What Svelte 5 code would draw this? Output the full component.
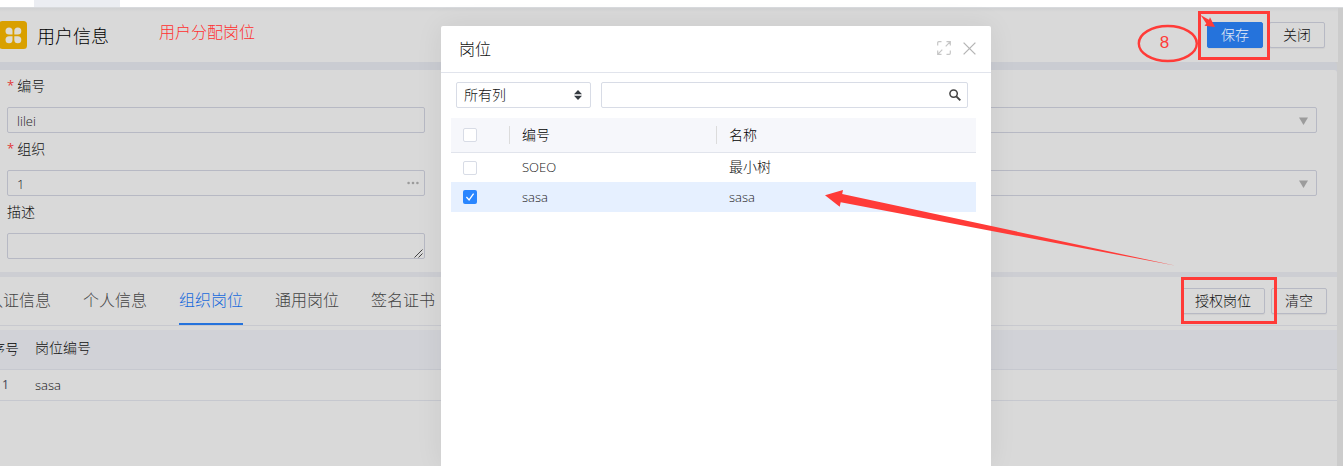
<script>
  const tabs = ['认证信息', '个人信息', '组织岗位', '通用岗位', '签名证书'];
  const active = '组织岗位';
  const rows = [
    { code: 'SOEO', name: '最小树', checked: false },
    { code: 'sasa', name: 'sasa', checked: true }
  ];
</script>

<div class="page">
  <div class="topbar"><span class="toptab"></span></div>

  <header class="head">
    <svg class="logo" viewBox="0 0 28 28">
      <rect width="28" height="28" rx="3.5" fill="#d9a000" />
      <g fill="#dedbd3">
        <path d="M13.500 13.500H10a3.500 3.500 0 1 1 3.500-3.500z" />
        <path d="M15.300 13.500V10a3.500 3.500 0 1 1 3.500 3.500z" />
        <path d="M13.500 15.300V18.800a3.500 3.500 0 1 1-3.500-3.500z" />
        <path d="M15.300 15.300h3.500a3.500 3.500 0 1 1-3.500 3.500z" />
      </g>
    </svg>
    <h1>用户信息</h1>
    <span class="note">用户分配岗位</span>
    <div class="actions">
      <button class="btn primary">保存</button>
      <button class="btn">关闭</button>
    </div>
  </header>

  <section class="card">
    <div class="col left">
      <div class="label"><i>*</i>编号</div>
      <div class="field">lilei</div>
      <div class="label"><i>*</i>组织</div>
      <div class="field">1
        <svg class="dots" width="12" height="4" viewBox="0 0 12 4" fill="#9b9b9b"><circle cx="1.6" cy="2" r="1.3" /><circle cx="6" cy="2" r="1.3" /><circle cx="10.4" cy="2" r="1.3" /></svg>
      </div>
      <div class="label">描述</div>
      <div class="field area">
        <svg width="9" height="9" viewBox="0 0 9 9" stroke="#444" stroke-width="1"><path d="M.5 8.5l8-8M4.5 8.5l4-4" /></svg>
      </div>
    </div>
    <div class="col right">
      <div class="label"></div>
      <div class="field"><svg class="caret" width="9" height="8" viewBox="0 0 9 8"><path d="M0 .5h9L4.500 8z" fill="#9c9c9c" /></svg></div>
      <div class="label"></div>
      <div class="field"><svg class="caret" width="9" height="8" viewBox="0 0 9 8"><path d="M0 .5h9L4.500 8z" fill="#9c9c9c" /></svg></div>
    </div>
  </section>

  <section class="panel">
    <div class="tabbar">
      <nav>
        {#each tabs as t}
          <span class="tab" class:active={t === active}>{t}</span>
        {/each}
      </nav>
      <div class="actions2">
        <button class="btn wide">授权岗位</button>
        <button class="btn">清空</button>
      </div>
    </div>
    <div class="grid ghead"><span class="no">序号</span><span>岗位编号</span></div>
    <div class="grid grow"><span class="no">1</span><span class="lat">sasa</span></div>
  </section>
</div>

<div class="modal">
  <div class="mhead">
    <span>岗位</span>
    <svg class="expand" width="14" height="14" viewBox="0 0 14 14" fill="none" stroke="#c6c6c6" stroke-width="1.2">
      <path d="M.7 4.500V1.700a1 1 0 0 1 1-1H4.500M9.500 .7h3.800v3.800M13.300 .7L8.700 5.300M13.300 9.500v2.800a1 1 0 0 1-1 1H9.500M4.500 13.300H.7V9.500M.7 13.300l4.600-4.600" />
    </svg>
    <svg width="13" height="13" viewBox="0 0 13 13" fill="none" stroke="#b5b5b5" stroke-width="1.3"><path d="M.6 .6l11.800 11.800M12.400 .6L.6 12.400" /></svg>
  </div>
  <div class="filter">
    <div class="select"><span>所有列</span>
      <svg width="8" height="10" viewBox="0 0 8 10" fill="#343a40"><path d="M0 4.200L4 0l4 4.200zM0 5.800h8L4 10z" /></svg>
    </div>
    <div class="search">
      <svg width="12" height="12" viewBox="0 0 12 12" fill="none" stroke="#444"><circle cx="4.600" cy="4.600" r="3.700" stroke-width="1.500" /><path d="M7.300 7.300l4 4" stroke-width="1.900" /></svg>
    </div>
  </div>
  <div class="table">
    <div class="tr th"><div><span class="box"></span></div><div class="sep"><span>编号</span></div><div class="sep"><span>名称</span></div></div>
    {#each rows as r}
      <div class="tr" class:sel={r.checked}>
        <div>
          <span class="box" class:on={r.checked}>
            {#if r.checked}
              <svg width="14" height="14" viewBox="0 0 14 14" fill="none" stroke="#fff" stroke-width="1.300"><path d="M3.400 7l2.700 3L10.600 3.700" /></svg>
            {/if}
          </span>
        </div>
        <div class="lat">{r.code}</div>
        <div class:lat={r.checked} class:cjk={!r.checked}>{r.name}</div>
      </div>
    {/each}
  </div>
</div>

<svg class="marks" width="1343" height="466" viewBox="0 0 1343 466">
  <g fill="none" stroke="#ff3b38" stroke-width="3">
    <rect x="1199.500" y="12.500" width="69" height="46" />
    <rect x="1182.500" y="278.500" width="93" height="44" />
    <ellipse cx="1167.800" cy="43.500" rx="29" ry="17.500" stroke-width="2.400" />
  </g>
  <g fill="#ff3b38">
    <path d="M825 195.300L843 190l-.8 4L1176 265.800 840.700 202.300l-1 4.500z" />
    <path d="M1200.500 15l8.500 4.800 1-2.600 5 9.800-10.500-1.200 1.800-2.200z" />
    <text x="1159.800" y="48">8</text>
  </g>
</svg>

<style>
  :global(body) { margin: 0; overflow: hidden; }
  :global(#app) { font: 14px/20px "Noto Sans CJK SC", sans-serif; font-weight: 300; color: #111; }
  .page { height: 466px; width: 1343px; background: #ccc; overflow: hidden; }
  .topbar { box-sizing: border-box; height: 8px; background: #fff; border-bottom: 1px solid #d8dadd; padding-left: 34px; display: flex; }
  .toptab { width: 86px; background: #ebedf2; }
  .head {
    width: 1338px; height: 54px; box-sizing: border-box; display: flex; align-items: center; padding-right: 13px;
    background: linear-gradient(#d0d1d3, #d9d9d9 4px);
  }
  .logo { width: 28px; height: 28px; margin-left: -1px; flex: none; }
  h1 { font-size: 18px; font-weight: 300; margin: -1px 0 0 10px; width: 72px; line-height: 26px; color: #000; white-space: nowrap; }
  .note { font-size: 16px; color: #ff3030; margin: -8px 0 0 50px; }
  .actions { margin-left: auto; display: flex; gap: 6px; }
  .btn {
    box-sizing: border-box; width: 56px; height: 26px; padding: 0 0 2px; border: 1px solid #b7b9c4; border-radius: 2px;
    background: #d9d9d9; color: #111; font: inherit; line-height: 20px; box-shadow: 0 1px 1px rgba(0, 0, 0, .05);
  }
  .btn.primary { background: #2573dc; border-color: #2573dc; color: #e8eef6; }
  .btn.wide { width: 84px; }
  .card {
    margin-top: 8px; width: 1337px; height: 202px; box-sizing: border-box; background: #d9d9d9; display: flex;
    justify-content: space-between; padding: 0 20px 0 7px; border-radius: 0 3px 0 0;
    box-shadow: 0 -8px 0 #caccd2, 0 5px 0 #cdced3;
  }
  .col { width: 418px; }
  .col.right { width: 600px; }
  .label { height: 37px; line-height: 31px; color: #111; }
  .label i { font: 13px/30px "Open Sans", sans-serif; color: #e23a3a; margin-right: 3px; float: left; }
  .field {
    box-sizing: border-box; height: 26px; border: 1px solid #b7b9c4; border-radius: 2px; padding: 1px 0 0 9px; display: flex;
    font-family: "Open Sans", sans-serif; font-size: 13px; color: #222; line-height: 24px;
  }
  .dots { margin: 9px 5px 0 auto; }
  .caret { margin: 8px 8px 0 auto; }
  .area { padding: 0; align-items: flex-end; justify-content: flex-end; }
  .area svg { margin: 0 1px 0 0; }
  .panel { margin-top: 5px; width: 1337px; height: 189px; background: #d9d9d9; }
  .tabbar { height: 48px; border-bottom: 1px solid #c8c9cf; display: flex; justify-content: space-between; padding-right: 10px; }
  nav { display: flex; gap: 32px; margin-left: -13px; }
  .tab { width: 64px; height: 46px; font-size: 16px; line-height: 44px; color: #444; white-space: nowrap; }
  .tab.active { color: #1769dc; border-bottom: 2px solid #2573dc; }
  .actions2 { display: flex; gap: 6px; padding-top: 11px; }
  .grid { display: flex; box-sizing: border-box; border-bottom: 1px solid #c6c8cf; }
  .ghead { margin-top: 4px; height: 40px; background: #d1d2d7; line-height: 35px; }
  .no { width: 28px; flex: none; margin-left: -9px; margin-right: 16px; color: #000; white-space: nowrap; }
  .ghead .no { line-height: 37px; }
  .grow { height: 31px; line-height: 30px; }
  .grow .no { width: 24px; margin-left: 2px; margin-right: 9px; font: 12px/30px "Open Sans", sans-serif; color: #445; }
  .lat { font-family: "Open Sans", sans-serif; font-size: 13px; font-weight: 300; }

  .modal {
    position: absolute; left: 441px; top: 26px; width: 550px; height: 440px; background: #fff; border-radius: 2px 2px 0 0;
    box-shadow: 0 0 28px rgba(0, 0, 0, .07);
  }
  .mhead { height: 46px; border-bottom: 1px solid #e1e4ec; display: flex; align-items: center; padding: 0 15px 0 18px; color: #111; }
  .mhead span { font-size: 16px; flex: 1; margin-top: -2px; }
  .mhead svg { margin-top: -2px; }
  .expand { margin-right: 12px; }
  .filter { display: flex; gap: 10px; padding: 9px 15px 10px; }
  .select, .search { box-sizing: border-box; height: 26px; border: 1px solid #d8dce6; border-radius: 2px; display: flex; align-items: center; justify-content: space-between; }
  .select { width: 135px; padding: 0 8px 0 7px; }
  .select span { margin-top: -2px; }
  .search { width: 367px; padding-right: 6px; justify-content: flex-end; }
  .table { margin: 0 15px 0 10px; }
  .tr { height: 29px; display: grid; grid-template-columns: 58px 207px 260px; align-items: center; }
  .tr > div { padding-left: 13px; line-height: 18px; }
  .tr > div:first-child { padding-left: 12px; }
  .tr > .cjk { margin-top: -3px; }
  .tr:not(.sel) > .lat { margin-top: -2px; }
  .th { height: 34px; background: #f6f7fb; border-bottom: 1px solid #e1e4ec; color: #000; }
  .tr > .sep { border-left: 1px solid #dcdcdc; padding-left: 12px; height: 18px; line-height: 16px; }
  .sel { height: 30px; background: #e6f0ff; color: #222; }
  .box { display: block; box-sizing: border-box; width: 14px; height: 14px; border: 1px solid #d8dce6; border-radius: 2px; background: #fff; }
  .box.on { background: #2a86ff; border: 0; }
  .box svg { display: block; }
  .marks { position: absolute; left: 0; top: 0; pointer-events: none; }
  .marks text { font: 17px "Liberation Sans", sans-serif; }
</style>
